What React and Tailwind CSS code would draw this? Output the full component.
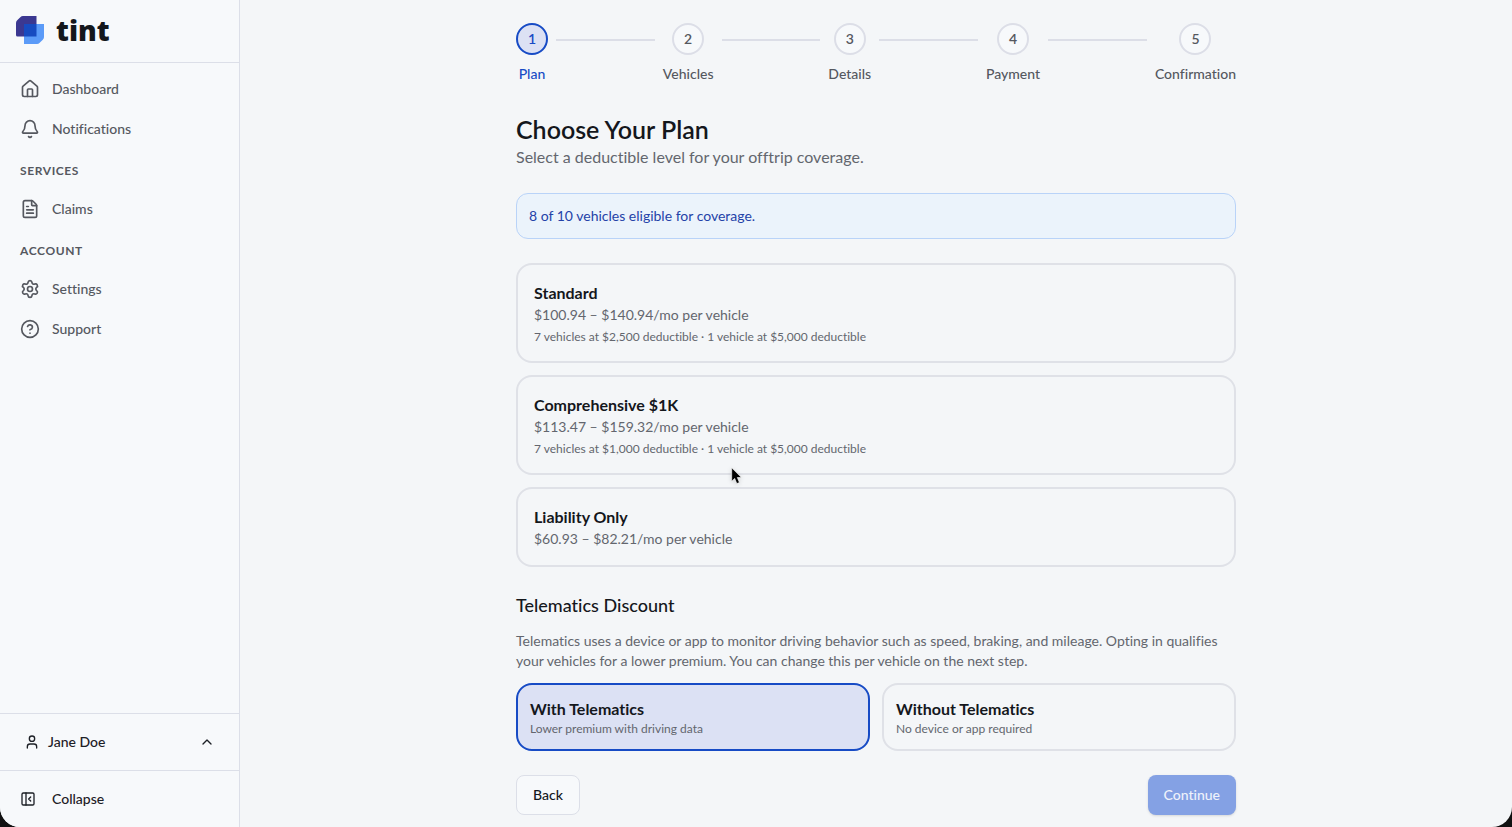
import { Fragment, useState } from "react";
import {
  Bell,
  ChevronUp,
  CircleHelp,
  FileText,
  House,
  PanelLeftClose,
  Settings,
  User,
} from "lucide-react";

const steps = ["Plan", "Vehicles", "Details", "Payment", "Confirmation"];

const plans = [
  {
    name: "Standard",
    price: "$100.94 – $140.94/mo per vehicle",
    detail: "7 vehicles at $2,500 deductible · 1 vehicle at $5,000 deductible",
  },
  {
    name: "Comprehensive $1K",
    price: "$113.47 – $159.32/mo per vehicle",
    detail: "7 vehicles at $1,000 deductible · 1 vehicle at $5,000 deductible",
  },
  { name: "Liability Only", price: "$60.93 – $82.21/mo per vehicle" },
];

const telematics = [
  { name: "With Telematics", detail: "Lower premium with driving data" },
  { name: "Without Telematics", detail: "No device or app required" },
];

function Logo() {
  return (
    <a href="#" className="flex h-15 items-center gap-3 pl-4 text-[#14171c]">
      <svg width="28" height="28" viewBox="0 0 28 28" aria-hidden="true">
        <path d="M7 0H20.5V20.5H1.5Q0 20.5 0 19V7Q0 5.5 1.2 4.3L4.3 1.2Q5.5 0 7 0Z" fill="#3b3891" />
        <path d="M8 8H28V21Q28 22.5 26.8 23.7L23.7 26.8Q22.5 28 21 28H8Z" fill="#5b9bf8" />
        <path d="M8 8H20.5V20.5H8Z" fill="#174bc0" />
      </svg>
      <span className="font-['Open_Sans',sans-serif] text-[28px] leading-8 font-extrabold">tint</span>
    </a>
  );
}

function NavItem({ icon: Icon, label }) {
  return (
    <a href="#" className="flex h-10 items-center gap-3 px-5 text-sm font-medium text-[#55585f]">
      <Icon size={20} />
      {label}
    </a>
  );
}

function NavHeading({ children }) {
  return (
    <h2 className="flex h-10 items-center px-5 pt-1 text-xs font-bold tracking-wider text-[#55585f]">
      {children}
    </h2>
  );
}

function Sidebar() {
  return (
    <aside className="flex w-60 shrink-0 flex-col border-r border-[#dcdfe8] bg-[#f7f9fb]">
      <div className="border-b border-[#dcdfe8] pb-0.5">
        <Logo />
      </div>
      <nav className="flex-1 pt-1.5">
        <NavItem icon={House} label="Dashboard" />
        <NavItem icon={Bell} label="Notifications" />
        <NavHeading>SERVICES</NavHeading>
        <NavItem icon={FileText} label="Claims" />
        <NavHeading>ACCOUNT</NavHeading>
        <NavItem icon={Settings} label="Settings" />
        <NavItem icon={CircleHelp} label="Support" />
      </nav>
      <button className="flex h-[57px] items-center gap-2 border-t border-[#dcdfe8] px-6 text-sm font-medium text-[#1d2026]">
        <User size={16} />
        Jane Doe
        <ChevronUp size={16} className="ml-auto" />
      </button>
      <button className="flex h-[57px] items-center gap-4 border-t border-[#dcdfe8] px-5 text-sm font-medium text-[#1d2026]">
        <PanelLeftClose size={16} />
        Collapse
      </button>
    </aside>
  );
}

function Stepper() {
  return (
    <div className="flex items-start">
      {steps.map((step, i) => (
        <Fragment key={step}>
          {i > 0 && <div className="mx-2 mt-4 h-0.5 flex-1 bg-[#dcdee7]" />}
          <div className="flex min-w-8 flex-col items-center gap-[9px] text-sm font-medium">
            <span
              className={
                i === 0
                  ? "flex size-8 items-center justify-center rounded-full border-2 border-[#174bc5] bg-[#dce1f4] font-semibold text-[#174bc5]"
                  : "flex size-8 items-center justify-center rounded-full border-2 border-[#dcdee7] bg-[#f7f9fb] font-semibold text-[#55585f]"
              }
            >
              {i + 1}
            </span>
            <span className={i === 0 ? "text-[#174bc5]" : "text-[#55585f]"}>{step}</span>
          </div>
        </Fragment>
      ))}
    </div>
  );
}

function OptionCard({ selected, onClick, className, children }) {
  return (
    <button
      aria-pressed={selected}
      onClick={onClick}
      className={`rounded-2xl border-2 text-left ${
        selected ? "border-[#174bc5] bg-[#dce1f4]" : "border-[#dfe1e7]"
      } ${className}`}
    >
      {children}
    </button>
  );
}

function Cursor() {
  return (
    <svg
      className="pointer-events-none absolute top-[467px] left-[731px] drop-shadow-sm"
      width="12"
      height="19"
      viewBox="0 0 12 19"
      aria-hidden="true"
    >
      <path
        d="M0.7 0.8V14.2L3.7 11.4L5.8 16.6L8.4 15.5L6.3 10.5H10.4Z"
        fill="#000"
        stroke="#fff"
        strokeWidth="0.6"
      />
    </svg>
  );
}

export default function App() {
  const [plan, setPlan] = useState(null);
  const [device, setDevice] = useState("With Telematics");

  return (
    <div className="h-screen bg-[#111] font-['Lato',sans-serif] [font-variant-ligatures:none]">
      <div className="relative flex h-full overflow-hidden rounded-b-[20px] bg-[#f4f6f8]">
        <Sidebar />
        <main className="flex-1 px-6 pt-[23px]">
          <div className="mx-auto max-w-[720px]">
            <Stepper />

            <h1 className="mt-[29px] text-[25px] leading-8 font-semibold text-[#14171c]">Choose Your Plan</h1>
            <p className="text-base text-[#63666e]">Select a deductible level for your offtrip coverage.</p>

            <div className="mt-6 rounded-xl border border-[#b9d3f8] bg-[#ebf3fb] p-3 text-sm text-[#2442a8]">
              8 of 10 vehicles eligible for coverage.
            </div>

            <div className="mt-6 flex flex-col gap-3">
              {plans.map((p) => (
                <OptionCard
                  key={p.name}
                  selected={plan === p.name}
                  onClick={() => setPlan(p.name)}
                  className="p-4"
                >
                  <div className="text-base font-bold text-[#14171c]">{p.name}</div>
                  <div className="text-sm text-[#63666e]">{p.price}</div>
                  {p.detail && <div className="mt-1 text-xs text-[#63666e]">{p.detail}</div>}
                </OptionCard>
              ))}
            </div>

            <h2 className="mt-6 text-lg font-medium text-[#14171c]">Telematics Discount</h2>
            <p className="mt-3 text-sm text-[#63666e]">
              Telematics uses a device or app to monitor driving behavior such as speed, braking, and mileage. Opting
              in qualifies your vehicles for a lower premium. You can change this per vehicle on the next step.
            </p>
            <div className="mt-3 grid grid-cols-2 gap-3">
              {telematics.map((t) => (
                <OptionCard
                  key={t.name}
                  selected={device === t.name}
                  onClick={() => setDevice(t.name)}
                  className="p-3"
                >
                  <div className="text-base font-bold text-[#14171c]">{t.name}</div>
                  <div className="text-xs text-[#63666e]">{t.detail}</div>
                </OptionCard>
              ))}
            </div>

            <div className="mt-6 flex justify-between">
              <button className="h-10 rounded-lg border border-[#dcdfe8] bg-[#f7f9fb] px-4 text-sm font-medium text-[#14171c]">
                Back
              </button>
              <button
                disabled={!plan}
                className="h-10 rounded-lg bg-[#174bc5] px-4 text-sm font-medium text-white shadow-sm disabled:bg-[#84a1e4] disabled:text-[#eef2fb]"
              >
                Continue
              </button>
            </div>
          </div>
        </main>
        <Cursor />
      </div>
    </div>
  );
}
